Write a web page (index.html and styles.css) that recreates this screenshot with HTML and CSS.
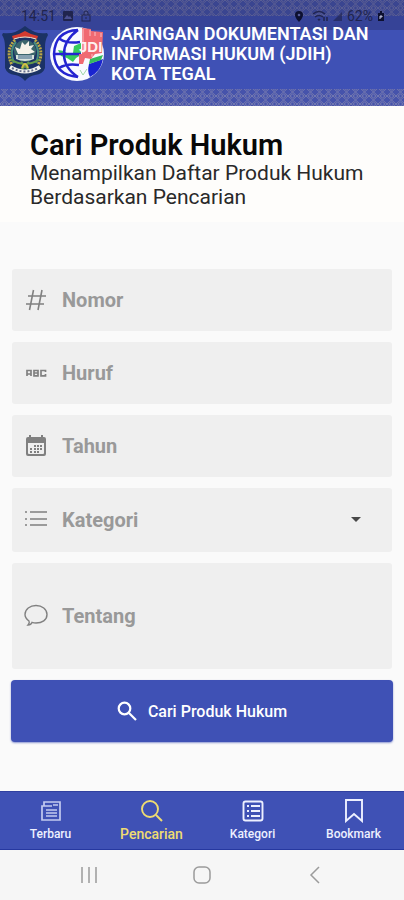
FILE: index.html
```html
<!DOCTYPE html>
<html lang="id">
<head>
<meta charset="utf-8">
<meta name="viewport" content="width=device-width, initial-scale=1">
<title>Cari Produk Hukum</title>
<link rel="stylesheet" href="styles.css">
</head>
<body>
<header class="header">
  <svg class="batik" aria-hidden="true">
    <defs>
      <pattern id="batik" width="9" height="8" patternUnits="userSpaceOnUse">
        <path d="M0 0l4.500 4L9 0M0 8l4.500-4L9 8M2 8l2.500-2L7 8M2 0l2.500 2L7 0" fill="none" stroke="#9a95ad" stroke-width="1"/>
      </pattern>
    </defs>
    <rect width="100%" height="100%" fill="url(#batik)"/>
  </svg>
  <div class="status">
    <span class="status-group">
      <span>14:51</span>
      <svg width="12" height="12" viewBox="0 0 12 12"><rect x="1" y="1" width="10" height="10" rx="1" fill="currentColor"/><path d="M2 9l3-4 2 2 1-1 2 3z" fill="#4a4f91"/></svg>
      <svg width="12" height="12" viewBox="0 0 12 12" fill="none" stroke="currentColor"><rect x="2" y="5" width="8" height="6"/><path d="M4 5V3a2 2 0 0 1 4 0v2M6 7v2"/></svg>
    </span>
    <span class="status-group status-right">
      <svg width="10" height="13" viewBox="0 0 10 13"><path d="M5 1a4 4 0 0 0-4 4c0 3 4 7 4 7s4-4 4-7a4 4 0 0 0-4-4z" fill="#0d1030"/><circle cx="5" cy="5" r="1.300" fill="#555a99"/></svg>
      <svg class="wifi" width="16" height="12" viewBox="0 0 16 12" fill="none" stroke="currentColor" stroke-width="1.500"><path d="M1 4q6-5 12 0M3 7q4-3 8 0M6 9l1 1 1-1M12 7v4M15 7v4"/></svg>
      <svg width="11" height="12" viewBox="0 0 11 12"><path d="M1 11L10 2v9z" fill="currentColor" opacity=".65"/></svg>
      <span>62%</span>
      <svg width="8" height="12" viewBox="0 0 8 12"><path d="M1 3h2V1h2v2h2v8H1z" fill="#0d1030"/><path d="M3 9V6h2v1H3" fill="none" stroke="#c5c8e4"/></svg>
    </span>
  </div>
  <div class="brand">
    <svg class="crest" width="48" height="60" viewBox="0 0 48 60" role="img" aria-label="Lambang Kota Tegal">
      <path d="M2 9q11 2 22-7 11 9 22 7l1 2q-3 5-3 12v21q-2 6-10 7-6 1-10 6-4-5-10-6-8-1-10-7V23q0-8-3-12z" fill="#1b3265"/>
      <path d="M14 16q-10 10-3 25M34 16q10 10 3 25" fill="none" stroke="#bda844" stroke-width="3" stroke-dasharray="2 1"/>
      <path d="M15 18q-7 8-2 21M33 18q7 8 2 21" fill="none" stroke="#468c80" stroke-width="2"/>
      <ellipse cx="24" cy="27" rx="11" ry="11" fill="#3b666c"/>
      <path d="M11 12l7-2 6-3 6 3 7 2-1 3q-12-4-24 0z" fill="#d43b30"/>
      <path d="M13 15q11-4 22 0" stroke="#f3e6d4" fill="none"/>
      <path d="M14 23l5 2 2-7 3 3 4-4v5l5-1-3 4 4 3-6 2H17z" fill="#f5f3e9"/>
      <path d="M15 31h18v4q-9 4-18 0z" fill="#d7e2dc"/>
      <path d="M17 32h14M17 34h14" stroke="#335e83"/>
      <path d="M9 35q15 10 30 0M20 46l8-8M28 46l-8-8" fill="none" stroke="#649b4a" stroke-width="2"/>
      <path d="M21 44q3-8 6 0" fill="none" stroke="#d3bd46" stroke-width="2"/>
      <path d="M9 43q15 9 30 0" fill="none" stroke="#f2f2ee" stroke-width="4"/>
      <path d="M11 44q13 7 26 0" fill="none" stroke="#67708e" stroke-width="2" stroke-dasharray="2 2"/>
    </svg>
    <svg class="globe" width="56" height="58" viewBox="0 0 56 58" role="img" aria-label="JDIH">
      <circle cx="28" cy="29" r="27" fill="#f8faff"/>
      <path d="M9 25l6 1 4 3 5-1 1-7 7-3v12l-5 3-3 4-6-4-6-2z" fill="#35cb5d"/>
      <g fill="none" stroke="#2424d1" stroke-width="2.500">
        <path d="M29 5Q6 6 5 29q1 21 24 23M29 5Q15 15 15 29t14 23M11 14q7 5 20 3M5 29h27M10 43q8-5 20-3"/>
      </g>
      <path d="M40 39l14-5q-2 12-13 18-3-5-1-13z" fill="#1924cf"/>
      <path d="M41 34l13-4-2 5-12 4z" fill="#35bb5d"/>
      <path d="M31 45l3 5 4-6" fill="none" stroke="#9ed7a9"/>
      <path d="M33 3l9 1v2l12 1-1 21-7 1-4 5-6-1-2 6h-4V29h3z" fill="#f06a72"/>
      <path d="M34 4v24M41 5v6M46 7v4M52 8v4M43 29v3" stroke="#fbc1c4" fill="none"/>
      <text class="globe-letters" x="30" y="27">JDI</text>
    </svg>
    <div class="brand-name">JARINGAN DOKUMENTASI DAN<br>INFORMASI HUKUM (JDIH)<br>KOTA TEGAL</div>
  </div>
</header>
<main>
  <section class="intro">
    <h1>Cari Produk Hukum</h1>
    <p>Menampilkan Daftar Produk Hukum Berdasarkan Pencarian</p>
  </section>
  <form class="search-form">
    <label class="field">
      <svg class="icon" viewBox="0 0 24 24" fill="none" stroke="currentColor" stroke-width="1.600"><path d="M9.500 2L5.500 22M18 2l-4 20M4 8h18M2 16h18"/></svg>
      <input type="text" placeholder="Nomor" aria-label="Nomor">
    </label>
    <label class="field">
      <svg class="icon" viewBox="0 0 24 24" fill="none" stroke="currentColor" stroke-width="1.700"><path d="M3 15V9.500h4V15M3 13h4M10 9.500h4v5.300h-4zM10 12h4M21.500 11V9.500H17v5.300h4.500V13"/></svg>
      <input type="text" placeholder="Huruf" aria-label="Huruf">
    </label>
    <label class="field">
      <svg class="icon" viewBox="0 0 24 24"><path fill="currentColor" fill-rule="evenodd" d="M5 1h2v2h10V1h2v2h1q2 0 2 2v15q0 2-2 2H4q-2 0-2-2V5q0-2 2-2h1zM4 9v10q0 1 1 1h14q1 0 1-1V9zM10 11h2v2h-2zm3 0h2v2h-2zm3 0h2v2h-2zM6 14h2v2H6zm4 0h2v2h-2zm3 0h2v2h-2zm3 0h2v2h-2zM6 17h2v2H6zm4 0h2v2h-2zm3 0h2v2h-2z"/></svg>
      <input type="text" placeholder="Tahun" aria-label="Tahun">
    </label>
    <label class="field field-select">
      <svg class="icon" viewBox="0 0 24 24" fill="none" stroke="currentColor" stroke-width="1.500"><path d="M1 4h2M1 11h2M1 17h2M6 4h17M6 11h17M6 17h17"/></svg>
      <select aria-label="Kategori"><option>Kategori</option></select>
      <svg class="caret" width="12" height="6" viewBox="0 0 12 6"><path d="M1 0h10L6 5z" fill="#484848"/></svg>
    </label>
    <label class="field field-large">
      <svg class="icon" viewBox="0 0 24 24" fill="none" stroke="currentColor" stroke-width="1.400"><path d="M5 17Q1 14 1 10.500C1 5 6 1.500 12 1.500s11 3.500 11 9S18 19 12 19q-2 0-4-.600Q7 21 4 21q2-2 1-4z"/></svg>
      <textarea rows="1" placeholder="Tentang" aria-label="Tentang"></textarea>
    </label>
    <button class="submit" type="submit">
      <svg width="20" height="20" viewBox="0 0 20 20" fill="none" stroke="currentColor" stroke-width="2.200"><circle cx="7.500" cy="7.500" r="5.800"/><path d="M12 12l7 7"/></svg>
      Cari Produk Hukum
    </button>
  </form>
</main>
<nav class="tabs" aria-label="Menu utama">
  <a href="#terbaru" class="tab">
    <svg class="tab-icon" viewBox="0 0 24 24" fill="none" stroke="#c3caf0" stroke-width="1.700"><path d="M5 3h16v18H3V7h2zM5 7h8M14 6h5M7 11h11M7 14h11M7 17h11"/></svg>Terbaru</a>
  <a href="#pencarian" class="tab active" aria-current="page">
    <svg class="tab-icon" viewBox="0 0 24 24" fill="none" stroke="currentColor" stroke-width="1.900"><circle cx="10" cy="10" r="8"/><path d="M16 16l6 6"/></svg>Pencarian</a>
  <a href="#kategori" class="tab">
    <svg class="tab-icon" viewBox="0 0 24 24" fill="none" stroke="currentColor" stroke-width="1.900"><rect x="2.500" y="2.500" width="19" height="19" rx="2"/><path d="M6 7h2M6 12h2M6 17h2M10 7h9M10 12h9M10 17h9"/></svg>Kategori</a>
  <a href="#bookmark" class="tab">
    <svg class="tab-icon" viewBox="0 0 24 24" fill="none" stroke="currentColor" stroke-width="1.900"><path d="M4 1h16v21l-8-7-8 7z"/></svg>Bookmark</a>
</nav>
<div class="system-nav">
  <button type="button" aria-label="Aplikasi terbaru"><svg width="20" height="20" viewBox="0 0 20 20"><path d="M3 2v16M10 2v16M17 2v16"/></svg></button>
  <button type="button" aria-label="Beranda"><svg width="20" height="20" viewBox="0 0 20 20"><rect x="2" y="2" width="16" height="16" rx="5"/></svg></button>
  <button type="button" aria-label="Kembali"><svg width="20" height="20" viewBox="0 0 20 20"><path d="M14 2L6 10l8 8"/></svg></button>
</div>
</body>
</html>
```
FILE: styles.css
```css
* { box-sizing: border-box; }
body {
  margin: 0;
  min-height: 100vh;
  display: flex;
  flex-direction: column;
  background: #fafafa;
  font-family: Roboto, "Liberation Sans", sans-serif;
}
svg { display: block; flex: none; }
button, input, select, textarea { font: inherit; }

.header {
  position: relative;
  padding-bottom: 22px;
  background: #3f51b5;
  color: #fff;
}
.header::after {
  content: "";
  position: absolute;
  inset: 16px 0 17px;
  background: #3f51b5;
}
.batik {
  position: absolute;
  width: 100%;
  height: 100%;
  background: #4c55a5;
  opacity: .6;
}
.status {
  position: relative;
  z-index: 1;
  display: flex;
  justify-content: space-between;
  height: 30px;
  padding: 2px 19px 0 21px;
  background: rgba(32, 38, 82, .3);
  color: #20244e;
  font-size: 14px;
  line-height: 26px;
}
.status-group { display: flex; align-items: center; gap: 6px; }
.status-right { gap: 4px; }
.wifi { margin-left: 4px; }
.brand {
  position: relative;
  z-index: 2;
  display: flex;
  align-items: center;
  height: 60px;
  margin-top: -6px;
  padding-left: 1px;
}
.globe-letters {
  fill: #fff0f0;
  font: bold 15px "Liberation Sans", sans-serif;
}
.brand-name {
  margin-left: 6px;
  white-space: nowrap;
  font-size: 18px;
  font-weight: 600;
  line-height: 20px;
}

.intro {
  padding: 24px 30px 13px;
  background: #fefdfb;
  color: #080808;
}
.intro h1 { margin: 0; font-size: 29px; font-weight: 600; line-height: 31px; }
.intro p { margin: 0; font-size: 21px; line-height: 24px; color: #292929; }

.search-form {
  display: flex;
  flex-direction: column;
  gap: 11px;
  padding: 47px 11px 24px;
}
.field {
  display: flex;
  align-items: center;
  gap: 14px;
  height: 62px;
  margin: 0 1px;
  padding: 0 12px;
  border-radius: 3px;
  background: #efefef;
  color: #808080;
}
.field-select { height: 64px; }
.field-large { height: 106px; }
.icon { width: 24px; height: 24px; }
.field input, .field select, .field textarea {
  flex: 1;
  min-width: 0;
  padding: 0;
  border: 0;
  outline: 0;
  appearance: none;
  resize: none;
  background: transparent;
  color: #999;
  font-size: 20px;
  font-weight: 700;
  line-height: 24px;
}
.field ::placeholder { color: #999; opacity: 1; }
.caret { margin-right: 18px; }
.submit {
  display: flex;
  align-items: center;
  justify-content: center;
  gap: 11px;
  height: 62px;
  padding: 0;
  border: 0;
  border-radius: 4px;
  background: #3f51b5;
  box-shadow: 0 1px 2px rgba(63, 81, 181, .6);
  color: #fff;
  font-size: 16px;
  font-weight: 500;
}

.tabs {
  display: grid;
  grid-template-columns: repeat(4, 1fr);
  height: 59px;
  margin-top: auto;
  border-top: 1px solid #3040a0;
  border-bottom: 1px solid #2638a0;
  background: #3f51b5;
}
.tab {
  display: flex;
  flex-direction: column;
  align-items: center;
  gap: 3px;
  padding-top: 7px;
  color: #edf0ff;
  font-size: 12px;
  font-weight: 500;
  line-height: 16px;
  text-decoration: none;
}
.tab-icon { width: 24px; height: 24px; }
.tab.active { color: #efdc71; font-size: 14px; }
.system-nav {
  display: flex;
  align-items: center;
  justify-content: center;
  gap: 93px;
  height: 50px;
  background: #f6f6f6;
}
.system-nav button { padding: 0; border: 0; background: none; }
.system-nav svg { fill: none; stroke: #9b9b9b; stroke-width: 1.500; }
```
